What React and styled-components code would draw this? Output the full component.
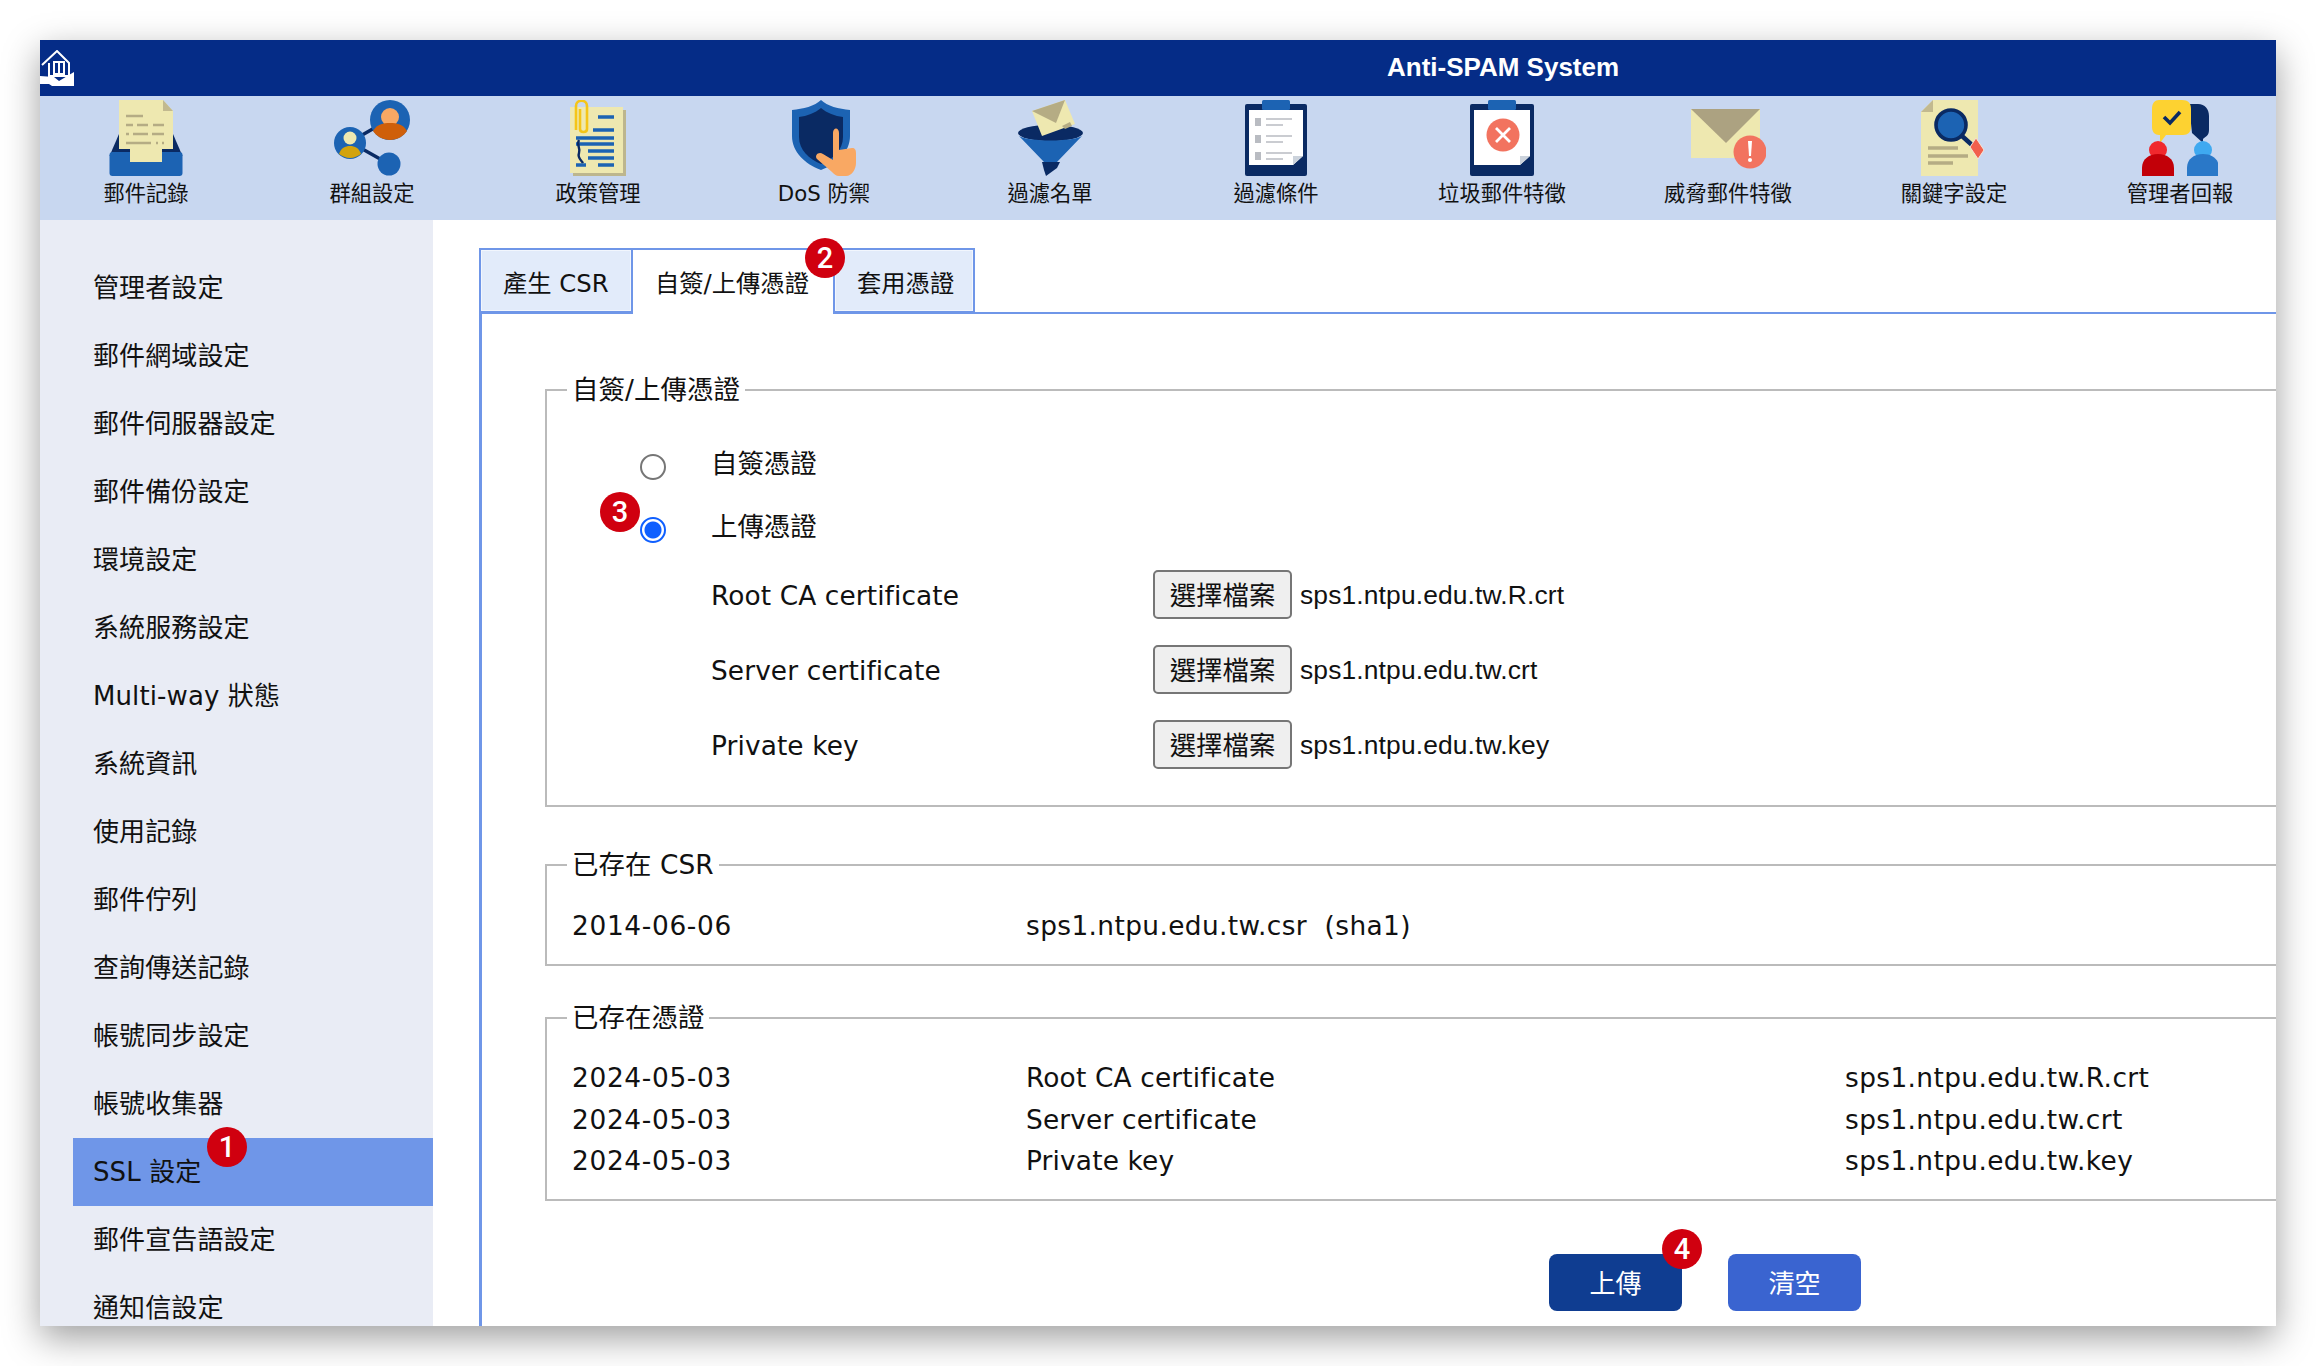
import React from "react";
import styled, { createGlobalStyle } from "styled-components";

const CJK = `"DejaVu Sans", "Noto Sans CJK TC", sans-serif`;
const BLUE = "#1c63b3";
const NAVY = "#0a2a63";
const PAPER = "#eee8b0";
const TAN = "#b5ac84";
const CORAL = "#f2735f";
const SKIN = "#f9a863";

const Global = createGlobalStyle`
  html, body { margin: 0; padding: 0; background: #fff; }
  body { width: 2316px; height: 1366px; overflow: hidden; font-family: ${CJK}; color: #111; }
`;

const Page = styled.div`
  padding: 40px;
  height: 1366px;
  box-sizing: border-box;
`;
const Win = styled.div`
  width: 2236px;
  height: 1286px;
  overflow: hidden;
  background: #fff;
  box-shadow: 0 12px 34px rgba(0, 0, 0, 0.38);
  display: flex;
  flex-direction: column;
`;
const Header = styled.header`
  height: 56px;
  flex: none;
  background: #052c87;
  display: flex;
  align-items: center;
`;
const Logo = styled.svg`
  width: 35px;
  height: 36px;
  flex: none;
  filter: blur(0.4px);
`;
const Title = styled.h1`
  margin: -2px 0 0 1312px;
  font: bold 26px/56px "Liberation Sans", Arial, sans-serif;
  color: #fff;
`;
const Toolbar = styled.nav`
  height: 124px;
  flex: none;
  background: #c8d7f0;
  display: flex;
  padding-top: 4px;
  box-sizing: border-box;
`;
const ToolRow = styled.div`
  display: grid;
  grid-template-columns: repeat(10, 226px);
  margin-left: -7px;
`;
const ToolItem = styled.div`
  display: flex;
  flex-direction: column;
  align-items: center;
`;
const ToolIcon = styled.svg`
  width: 76px;
  height: 76px;
  filter: blur(0.5px);
`;
const ToolLabel = styled.span`
  margin-top: 4px;
  font-size: 21.3px;
  line-height: 28px;
  white-space: nowrap;
  color: #111;
`;
const Main = styled.div`
  flex: 1;
  display: flex;
  min-height: 0;
`;
const Sidebar = styled.aside`
  width: 393px;
  flex: none;
  background: #e9ecf5;
  padding: 34px 0 0 33px;
  box-sizing: border-box;
`;
const SideItem = styled.div`
  position: relative;
  height: 68px;
  line-height: 68px;
  padding-left: 20px;
  font-size: 26px;
  letter-spacing: 0.1px;
  white-space: nowrap;
  color: #111;
  background: ${(p) => (p.$active ? "#6f96e8" : "transparent")};
`;
const Badge = styled.span`
  position: absolute;
  left: ${(p) => p.$left}px;
  top: ${(p) => p.$top}px;
  width: 40px;
  height: 40px;
  border-radius: 50%;
  background: #d0000f;
  color: #fff;
  font: 500 29px/40px Roboto, "Liberation Sans", sans-serif;
  letter-spacing: 0;
  text-align: center;
  z-index: 2;
`;
const Content = styled.main`
  flex: 1;
  min-width: 0;
  padding: 28px 0 0 46px;
`;
const Tabs = styled.div`
  display: flex;
  height: 66px;
  position: relative;
  z-index: 1;
`;
const Tab = styled.div`
  position: relative;
  box-sizing: border-box;
  width: ${(p) => p.$w}px;
  height: ${(p) => (p.$active ? 66 : 65)}px;
  padding-left: 22px;
  font-size: 24.3px;
  line-height: 68px;
  white-space: nowrap;
  color: #111;
  background: ${(p) => (p.$active ? "#fff" : "#e2ebfa")};
  border: 2px solid #6f96e8;
  border-width: ${(p) => (p.$active ? "2px 0 0 0" : "2px")};
  box-shadow: ${(p) => (p.$active ? "none" : "inset 0 0 0 1px #f2f6fd")};
`;
const Panel = styled.section`
  border-top: 2px solid #6f96e8;
  border-left: 3px solid #6f96e8;
  margin-top: -2px;
  height: 1100px;
  padding: 58px 0 0 63px;
  box-sizing: border-box;
`;
const Field = styled.fieldset`
  margin: ${(p) => p.$mt || 0}px -8px 0 0;
  padding: ${(p) => p.$pt}px 0 ${(p) => p.$pb}px 25px;
  border: 2px solid #bbb;
  min-width: 0;
`;
const Legend = styled.legend`
  margin-left: -5px;
  padding: 0 5px;
  font-size: 26.4px;
  letter-spacing: 0.1px;
  line-height: 36px;
  color: #111;
`;
const RadioRow = styled.div`
  position: relative;
  height: 63px;
  display: flex;
  align-items: center;
  font-size: 26.4px;
`;
const RadioCell = styled.div`
  width: 71px;
  margin-left: 68px;
  padding-top: 10px;
  display: flex;
  flex: none;
`;
const Radio = styled.input.attrs({ type: "radio", readOnly: true })`
  appearance: none;
  box-sizing: border-box;
  width: 26px;
  height: 26px;
  margin: 0;
  border: 2px solid #767676;
  border-radius: 50%;
  background: #fff;

  &:checked {
    border-color: #0f5fff;
    background: radial-gradient(circle, #0f5fff 0 8px, #fff 9px);
  }
`;
const FileRows = styled.div`
  margin-top: 14px;
  display: flex;
  flex-direction: column;
  gap: 26px;
`;
const FileRow = styled.div`
  height: 49px;
  display: flex;
  align-items: center;
`;
const FileLabel = styled.span`
  width: 442px;
  margin-left: 139px;
  padding-top: 2px;
  flex: none;
  font-size: 26.4px;
  letter-spacing: 0.1px;
  color: #111;
`;
const FileButton = styled.button`
  width: 139px;
  height: 49px;
  box-sizing: border-box;
  padding: 0 0 2px;
  background: #efefef;
  border: 2px solid #767676;
  border-radius: 5px;
  font: 26.4px "Liberation Sans", "Noto Sans CJK TC", sans-serif;
  color: #111;
`;
const FileName = styled.span`
  margin-left: 8px;
  padding-top: 2px;
  font: 26.4px "Liberation Sans", Arial, sans-serif;
  letter-spacing: 0.14px;
  color: #111;
`;
const DataGrid = styled.div`
  display: grid;
  grid-template-columns: 454px 819px 1fr;
  grid-auto-rows: ${(p) => p.$row}px;
  align-items: center;
  font-size: 26.4px;
  white-space: pre;
  color: #111;
`;
const DateCell = styled.span`
  letter-spacing: 0.65px;
`;
const NameCell = styled.span`
  letter-spacing: 0.15px;
`;
const FileCell = styled.span`
  letter-spacing: 0.38px;
`;
const Actions = styled.div`
  display: flex;
  gap: 46px;
  margin: 53px 0 0 1004px;
`;
const ActionBtn = styled.button`
  position: relative;
  width: 133px;
  height: 57px;
  padding: 0 0 2px;
  border: 0;
  border-radius: 8px;
  color: #fff;
  font: 26px "Noto Sans CJK TC", sans-serif;
  background: ${(p) => (p.$primary ? "#0f3d91" : "#3a64d0")};
`;

const InboxIcon = () => (
  <ToolIcon viewBox="0 0 76 76">
    <path d="M1.5 56 11 34h54l9.5 22z" fill={NAVY} />
    <rect x="1.5" y="52" width="73" height="24" rx="3" fill={BLUE} />
    <path d="M11 0h44l10 11v38H54v13H22V49H11z" fill={PAPER} />
    <path d="M55 0l10 11H55z" fill="#c2b98f" />
    <path d="M18 16h17M18 25h7M29 25h11M45 25h11M18 34h3M25 34h15M44 34h12M18 43h25M48 43h2M54 43h2" stroke={TAN} strokeWidth="2.6" />
  </ToolIcon>
);
const GroupIcon = () => (
  <ToolIcon viewBox="0 0 76 76">
    <path d="M16 42 56 19M16 42 55 64" stroke={NAVY} strokeWidth="3.5" />
    <circle cx="56" cy="20" r="20" fill={BLUE} />
    <circle cx="56" cy="17" r="9" fill={SKIN} />
    <path d="M39 31c4-7 10-8 17-8s13 1 17 8c-3 5-10 9-17 9s-14-4-17-9z" fill="#cf5f0a" />
    <circle cx="16" cy="43" r="16" fill={BLUE} />
    <circle cx="16" cy="38" r="6.5" fill={PAPER} />
    <path d="M5 54c2-6 6-8 11-8s9 2 11 8c-3 2-7 4-11 4s-8-2-11-4z" fill="#d3a30d" />
    <circle cx="55" cy="64" r="11.5" fill={BLUE} />
  </ToolIcon>
);
const PolicyIcon = () => (
  <ToolIcon viewBox="0 0 76 76">
    <rect x="13" y="10" width="53" height="66" fill="#bdb68e" />
    <rect x="10" y="7" width="53" height="66" fill={PAPER} />
    <path d="M16 30V6c0-7 11-7 11 0v23c0 4-7 4-7 0V9" fill="none" stroke="#f5c518" strokeWidth="2.6" />
    <path d="M38 17h16M33 30h21M16 38h38M16 44h38M28 51h26M28 58h26M16 65h10M38 65h16" stroke={BLUE} strokeWidth="3.6" />
    <path d="M19 40c-3 5 2 8 0 13s3 8 4 10" fill="none" stroke={NAVY} strokeWidth="2.4" />
  </ToolIcon>
);
const ShieldIcon = () => (
  <ToolIcon viewBox="0 0 76 76">
    <path d="M35 0c6 6 18 9 29 10v26c0 16-13 28-29 34C19 64 6 52 6 36V10C17 9 29 6 35 0z" fill={BLUE} />
    <path d="M35 8c6 5 14 8 22 9v20c0 13-10 22-22 27-12-5-22-14-22-27V17c8-1 16-4 22-9z" fill={NAVY} />
    <path d="M47 33c0-6 6-6 6 0v17l13-2c3 0 4 2 4 5v10c0 6-4 13-10 13h-7c-3 0-5-2-7-4L31 59c-3-4 2-8 6-5l10 6z" fill={SKIN} />
  </ToolIcon>
);
const FunnelIcon = () => (
  <ToolIcon viewBox="0 0 76 76">
    <ellipse cx="38.5" cy="33" rx="32.5" ry="8" fill={NAVY} />
    <path d="M7 36c10 6 53 6 63 0L45 62H32z" fill={BLUE} />
    <path d="M30 62h18l-3 6-11 8-2-6z" fill={NAVY} />
    <path d="M20 11 53 0l10 24-33 12z" fill={PAPER} />
    <path d="M20 11 53 0l-9 23z" fill={TAN} />
    <path d="M50 26l8-4 2 4-7 3z" fill={TAN} />
  </ToolIcon>
);
const Clipboard = ({ x = 7, w = 62, children }) => (
  <ToolIcon viewBox="0 0 76 76">
    <rect x={x} y="4" width={w} height="72" rx="2" fill={NAVY} />
    <path d={`M${x + 4} 10h${w - 8}v46l-10 9H${x + 4}z`} fill="#fff" />
    <path d={`M${x + w - 14} 65V56h10z`} fill="#ccd3dc" />
    <rect x="24" y="0" width="28" height="10" rx="1.5" fill={BLUE} />
    {children}
  </ToolIcon>
);
const ConditionIcon = () => (
  <Clipboard>
    <path d="M17 18h6v8h-6zM17 35h6v8h-6zM17 52h6v8h-6z" fill="#b9bcc2" />
    <path d="M28 19h26M28 25h17M28 36h26M28 42h17M28 53h26M28 59h17" stroke="#b9bcc2" strokeWidth="1.6" />
  </Clipboard>
);
const SpamIcon = () => (
  <Clipboard x={6} w={64}>
    <circle cx="39" cy="35" r="16.5" fill={CORAL} />
    <path d="M32 28l14 14M46 28 32 42" stroke="#fff" strokeWidth="2.8" />
  </Clipboard>
);
const ThreatIcon = () => (
  <ToolIcon viewBox="0 0 76 76">
    <rect x="1" y="9" width="69" height="49" fill={PAPER} />
    <path d="M1 9h69L36 43z" fill="#aca281" />
    <circle cx="60" cy="52" r="16.5" fill={CORAL} />
    <path d="M58 41h4l-1 15h-2z" fill="#fff" />
    <circle cx="60" cy="60" r="2" fill="#fff" />
  </ToolIcon>
);
const KeywordIcon = () => (
  <ToolIcon viewBox="0 0 76 76">
    <path d="M17 0h45v76H5V12z" fill={PAPER} />
    <path d="M17 0v12H5z" fill="#c2b98f" />
    <path d="M12 48h30M12 56h40M12 63h25" stroke={TAN} strokeWidth="3.4" />
    <path d="M46 36l10 9" stroke={NAVY} strokeWidth="4.5" />
    <circle cx="35" cy="25" r="15" fill={BLUE} stroke={NAVY} strokeWidth="3.6" />
    <path d="M60 38l8 12-6 9-8-12z" fill="#f2604d" stroke="#f3e6d8" strokeWidth="1" />
  </ToolIcon>
);
const ReportIcon = () => (
  <ToolIcon viewBox="0 0 76 76">
    <path d="M47 4h9c7 0 11 5 11 12v14c0 6-4 7-6 9v4L50 33z" fill={NAVY} />
    <path d="M17 0h23c6 0 9 3 9 9v18c0 5-3 8-8 8H24l-6 8v-8h-1c-4 0-7-3-7-8V9c0-6 3-9 7-9z" fill="#fdd231" />
    <path d="M22 17l6 6 10-11" fill="none" stroke={NAVY} strokeWidth="3.6" />
    <circle cx="16" cy="50" r="9" fill="#f0282d" />
    <path d="M0 76V68c0-9 7-14 16-14s16 5 16 14v8z" fill="#c20008" />
    <circle cx="61" cy="50" r="9" fill="#3fa9f0" />
    <path d="M45 76V68c0-9 7-14 16-14s16 5 16 14v8z" fill="#2a78c8" />
  </ToolIcon>
);

const tools = [
  ["郵件記錄", InboxIcon],
  ["群組設定", GroupIcon],
  ["政策管理", PolicyIcon],
  ["DoS 防禦", ShieldIcon],
  ["過濾名單", FunnelIcon],
  ["過濾條件", ConditionIcon],
  ["垃圾郵件特徵", SpamIcon],
  ["威脅郵件特徵", ThreatIcon],
  ["關鍵字設定", KeywordIcon],
  ["管理者回報", ReportIcon],
];

const menu = [
  "管理者設定", "郵件網域設定", "郵件伺服器設定", "郵件備份設定", "環境設定", "系統服務設定",
  "Multi-way 狀態", "系統資訊", "使用記錄", "郵件佇列", "查詢傳送記錄", "帳號同步設定",
  "帳號收集器", "SSL 設定", "郵件宣告語設定", "通知信設定",
];

const files = [
  ["Root CA certificate", "sps1.ntpu.edu.tw.R.crt"],
  ["Server certificate", "sps1.ntpu.edu.tw.crt"],
  ["Private key", "sps1.ntpu.edu.tw.key"],
];

export default function App() {
  return (
    <Page>
      <Global />
      <Win>
        <Header>
          <Logo viewBox="0 0 35 36">
            <path d="M0 26l14 1 5 4 15-9v14H12l-3-2H0z" fill="#fff" />
            <path d="M2 15 17 1l12 12v13H9V13" fill="none" stroke="#fff" strokeWidth="2" />
            <path d="M14 12h10v12H14zM19 12v12" fill="none" stroke="#fff" strokeWidth="2" />
          </Logo>
          <Title>Anti-SPAM System</Title>
        </Header>
        <Toolbar>
          <ToolRow>
            {tools.map(([label, Icon]) => (
              <ToolItem key={label}>
                <Icon />
                <ToolLabel>{label}</ToolLabel>
              </ToolItem>
            ))}
          </ToolRow>
        </Toolbar>
        <Main>
          <Sidebar>
            {menu.map((m) => (
              <SideItem key={m} $active={m === "SSL 設定"}>
                {m}
                {m === "SSL 設定" && <Badge $left={134} $top={-11}>1</Badge>}
              </SideItem>
            ))}
          </Sidebar>
          <Content>
            <Tabs>
              <Tab $w={154}>產生 CSR</Tab>
              <Tab $w={200} $active>
                自簽/上傳憑證
                <Badge $left={172} $top={-12}>2</Badge>
              </Tab>
              <Tab $w={142}>套用憑證</Tab>
            </Tabs>
            <Panel>
              <Field $pt={22} $pb={36}>
                <Legend>自簽/上傳憑證</Legend>
                <RadioRow>
                  <RadioCell><Radio name="cert" /></RadioCell>
                  自簽憑證
                </RadioRow>
                <RadioRow>
                  <Badge $left={28} $top={-1}>3</Badge>
                  <RadioCell><Radio name="cert" defaultChecked /></RadioCell>
                  上傳憑證
                </RadioRow>
                <FileRows>
                  {files.map(([label, name]) => (
                    <FileRow key={label}>
                      <FileLabel>{label}</FileLabel>
                      <FileButton>選擇檔案</FileButton>
                      <FileName>{name}</FileName>
                    </FileRow>
                  ))}
                </FileRows>
              </Field>
              <Field $mt={40} $pt={21} $pb={18}>
                <Legend>已存在 CSR</Legend>
                <DataGrid $row={42}>
                  <DateCell>2014-06-06</DateCell>
                  <FileCell>sps1.ntpu.edu.tw.csr  (sha1)</FileCell>
                  <span />
                </DataGrid>
              </Field>
              <Field $mt={34} $pt={21} $pb={17.5}>
                <Legend>已存在憑證</Legend>
                <DataGrid $row={41.5}>
                  {files.map(([label, name]) => (
                    <React.Fragment key={label}>
                      <DateCell>2024-05-03</DateCell>
                      <NameCell>{label}</NameCell>
                      <FileCell>{name}</FileCell>
                    </React.Fragment>
                  ))}
                </DataGrid>
              </Field>
              <Actions>
                <ActionBtn $primary>
                  上傳
                  <Badge $left={113} $top={-25}>4</Badge>
                </ActionBtn>
                <ActionBtn>清空</ActionBtn>
              </Actions>
            </Panel>
          </Content>
        </Main>
      </Win>
    </Page>
  );
}
